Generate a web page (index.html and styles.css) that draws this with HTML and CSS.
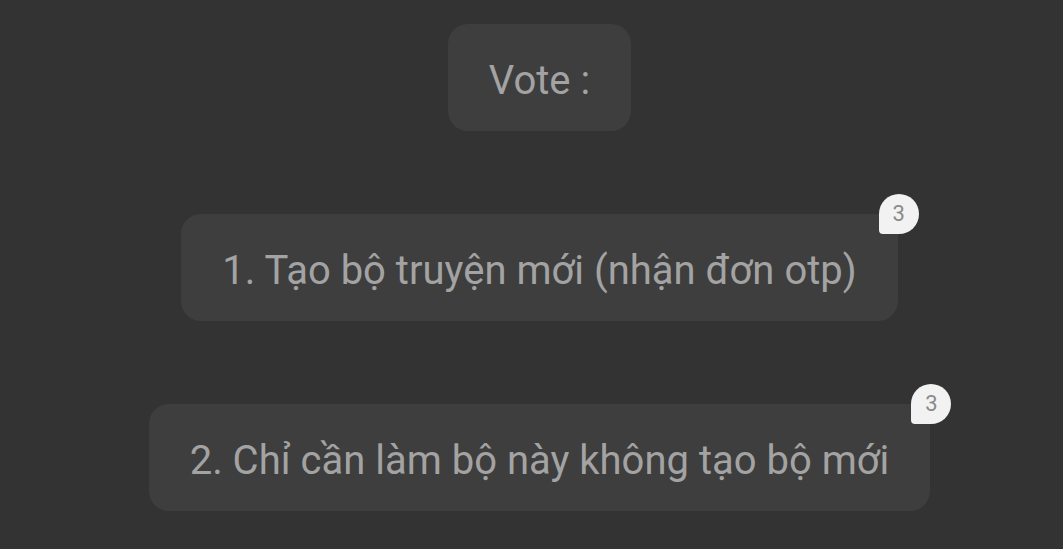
FILE: index.html
```html
<!DOCTYPE html>
<html lang="vi">
<head>
    <meta charset="UTF-8">
    <meta name="viewport" content="width=device-width, initial-scale=1.0">
    <title>Vote</title>
    <link rel="stylesheet" href="styles.css">
</head>
<body>
    <div id="poll">
        <div class="bubble title">Vote :</div>
        <div class="bubble option">
            1. Tạo bộ truyện mới (nhận đơn otp)
            <span class="count">3</span>
        </div>
        <div class="bubble option">
            2. Chỉ cần làm bộ này không tạo bộ mới
            <span class="count">3</span>
        </div>
    </div>
</body>
</html>
```

FILE: styles.css
```css
body {
    font-family: Roboto, "Noto Sans", Arial, sans-serif;
    background-color: #333333;
    margin: 0;
    padding: 0;
}

#poll {
    display: flex;
    flex-direction: column;
    align-items: center;
    gap: 83px;
    padding-top: 24px;
    padding-left: 16px;
}

.bubble {
    position: relative;
    background-color: #3e3e3e;
    color: #a3a3a3;
    font-size: 40px;
    line-height: 47px;
    padding: 33px 41px 27px;
    border-radius: 20px;
    white-space: nowrap;
}

.count {
    position: absolute;
    top: -20px;
    right: -21px;
    width: 40px;
    height: 40px;
    display: flex;
    align-items: center;
    justify-content: center;
    background-color: #f2f2f2;
    color: #8a8a8a;
    font-size: 22px;
    line-height: 1;
    border-radius: 20px 20px 20px 4px;
}
```
